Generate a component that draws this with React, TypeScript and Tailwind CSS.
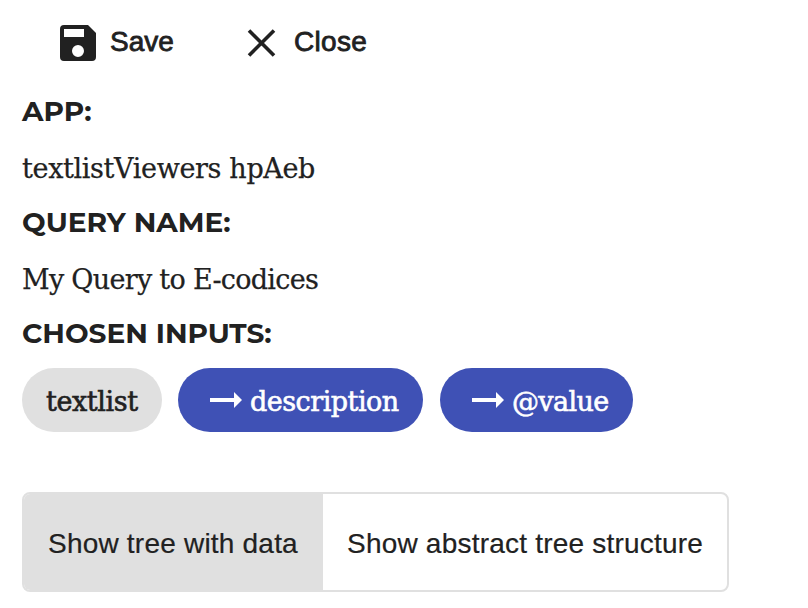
import type { ReactNode } from "react";

const slab = "font-['Roboto_Slab','DejaVu_Serif',serif]";

function Heading({ children }: { children: string }) {
  return (
    <h2 className="h-[34px] font-['Montserrat','Inter',sans-serif] text-[28px] leading-[34px] font-bold whitespace-nowrap">
      {children}
    </h2>
  );
}

function Value({ children, spacing }: { children: string; spacing: string }) {
  return <p className={`mt-[21px] mb-[16px] h-[40px] whitespace-nowrap text-[27px] leading-[40px] [-webkit-text-stroke:0.25px_currentColor] ${slab} ${spacing}`}>{children}</p>;
}

function Arrow() {
  return (
    <svg className="mr-[8px] h-[16px] w-[32px] shrink-0" viewBox="0 0 32 16" fill="currentColor">
      <path d="M0 6h24V0l8 8-8 8v-6H0z" />
    </svg>
  );
}

function Chip({ className, children }: { className: string; children: ReactNode }) {
  return (
    <div className={`flex h-16 items-center rounded-full text-[27px] leading-[40px] whitespace-nowrap [-webkit-text-stroke:0.6px_currentColor] ${slab} ${className}`}>
      {children}
    </div>
  );
}

export default function App() {
  return (
    <main className="h-[608px] w-[808px] overflow-hidden bg-white px-[22px] pt-[22px] text-[#212121]">
      <div className="flex h-[40px] items-center pl-[38px] font-['Liberation_Sans',Arial,sans-serif] text-[28px] leading-[40px] [-webkit-text-stroke:0.8px_#212121]">
        <button className="flex w-[187px] items-center">
          <svg className="mt-[2px] mr-[14px] h-[36px] w-[36px]" viewBox="3 3 18 18" fill="currentColor">
            <path d="M17 3H5a2 2 0 0 0-2 2v14a2 2 0 0 0 2 2h14a2 2 0 0 0 2-2V7zm-5 16a3 3 0 1 1 0-6 3 3 0 0 1 0 6zm3-10H5V5h10z" />
          </svg>
          <span>Save</span>
        </button>
        <button className="flex items-center">
          <svg className="mr-[18px] h-[29px] w-[29px]" viewBox="0 0 29 29" fill="none" stroke="currentColor" strokeWidth="3.6">
            <path d="M2 2.5l25 25M27 2.5L2 27.5" />
          </svg>
          <span className="tracking-[0.3px]">Close</span>
        </button>
      </div>
      <section className="pt-[32px]">
        <Heading>APP:</Heading>
        <Value spacing="tracking-[-0.35px]">textlistViewers hpAeb</Value>
        <Heading>QUERY NAME:</Heading>
        <Value spacing="tracking-[-0.71px]">My Query to E-codices</Value>
        <Heading>CHOSEN INPUTS:</Heading>
      </section>
      <div className="mt-[18px] flex">
        <Chip className="mr-4 w-[140px] bg-[#e0e0e0] pl-6">
          <span className="mt-[3px] tracking-[-0.4px]">textlist</span>
        </Chip>
        <Chip className="mr-[17px] w-[245px] bg-[#3f51b5] pl-8 text-white">
          <Arrow />
          <span className="mt-[3px] tracking-[-0.5px]">description</span>
        </Chip>
        <Chip className="w-[193px] bg-[#3f51b5] pl-8 text-white">
          <Arrow />
          <span className="mt-[3px] tracking-[-0.65px]">@value</span>
        </Chip>
      </div>
      <div className="mt-[60px] flex h-[100px] w-[707px] overflow-hidden rounded-lg border-2 border-[#e0e0e0] font-['Liberation_Sans',Arial,sans-serif] text-[28px] tracking-[0.21px] whitespace-nowrap [-webkit-text-stroke:0.2px_#212121]">
        <button className="flex w-[299px] items-center bg-[#e0e0e0] pt-1 pl-6"><span>Show tree with data</span></button>
        <button className="flex items-center pt-1 pl-6"><span>Show abstract tree structure</span></button>
      </div>
    </main>
  );
}
